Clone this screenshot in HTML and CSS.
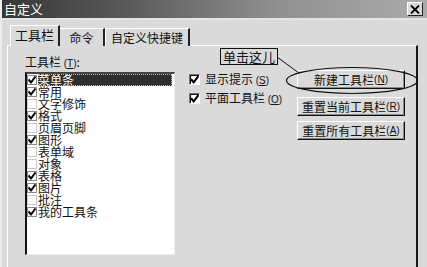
FILE: index.html
```html
<!DOCTYPE html>
<html lang="zh">
<head>
<meta charset="utf-8">
<title>自定义</title>
<link rel="stylesheet" href="styles.css">
</head>
<body>
<div class="window">
  <div class="titlebar">
    <span class="title">自定义</span>
    <span class="close">
      <svg width="10" height="9" viewBox="0 0 10 9"><path d="M1 0.5 L9 8.5 M9 0.5 L1 8.5" stroke="#000" stroke-width="1.8"/></svg>
    </span>
  </div>
  <div class="tabs">
    <div class="tab active">工具栏</div>
    <div class="tab t2">命令</div>
    <div class="tab t3">自定义快捷键</div>
  </div>
  <div class="panel">
    <div class="col-list">
      <div class="label">工具栏 <span class="acc">(<u>T</u>)</span>:</div>
      <div class="listbox">
        <div class="row sel"><span class="cb on"></span><span class="txt">菜单条</span></div>
        <div class="row"><span class="cb on"></span><span class="txt">常用</span></div>
        <div class="row"><span class="cb"></span><span class="txt">文字修饰</span></div>
        <div class="row"><span class="cb on"></span><span class="txt">格式</span></div>
        <div class="row"><span class="cb"></span><span class="txt">页眉页脚</span></div>
        <div class="row"><span class="cb on"></span><span class="txt">图形</span></div>
        <div class="row"><span class="cb"></span><span class="txt">表单域</span></div>
        <div class="row"><span class="cb"></span><span class="txt">对象</span></div>
        <div class="row"><span class="cb on"></span><span class="txt">表格</span></div>
        <div class="row"><span class="cb on"></span><span class="txt">图片</span></div>
        <div class="row"><span class="cb"></span><span class="txt">批注</span></div>
        <div class="row"><span class="cb on"></span><span class="txt">我的工具条</span></div>
      </div>
    </div>
    <div class="col-opts">
      <div class="opt"><span class="bigcb on"></span><span>显示提示 <span class="acc">(<u>S</u>)</span></span></div>
      <div class="opt"><span class="bigcb on"></span><span>平面工具栏 <span class="acc">(<u>O</u>)</span></span></div>
    </div>
    <div class="col-btns">
      <div class="btn first">新建工具栏 <span class="acc">(<u>N</u>)</span></div>
      <div class="btn second">重置当前工具栏 <span class="acc">(<u>R</u>)</span></div>
      <div class="btn">重置所有工具栏 <span class="acc">(<u>A</u>)</span></div>
    </div>
  </div>
  <div class="callout">单击这儿</div>
  <svg class="annot" width="427" height="267" viewBox="0 0 427 267">
    <path d="M277 57 L299 73" stroke="#111" stroke-width="1" fill="none"/>
    <ellipse cx="352" cy="80.5" rx="65.5" ry="13" stroke="#111" stroke-width="1.2" fill="none"/>
  </svg>
</div>
</body>
</html>
```

FILE: styles.css
```css
* { box-sizing: border-box; }
html, body { margin: 0; padding: 0; }
body {
  background: #dadada;
  font-family: "Noto Sans CJK SC", "Liberation Sans", sans-serif;
  font-size: 12px;
  color: #111;
}
.window {
  position: relative;
  width: 427px;
  height: 267px;
  overflow: hidden;
  background: #dadada;
  border-left: 2px solid #ececec;
}
.titlebar {
  height: 20px;
  display: flex;
  align-items: center;
  justify-content: space-between;
  padding: 0 4px 0 2px;
  background: linear-gradient(to right, #363636 0%, #5a5a5a 30%, #909090 65%, #ababab 100%);
  border-bottom: 2px solid #e4e4e4;
  margin-left: -2px;
}
.title {
  color: #fff;
  font-size: 13px;
  line-height: 14px;
  padding-left: 2px;
}
.close {
  width: 16px;
  height: 14px;
  display: flex;
  align-items: center;
  justify-content: center;
  background: #d8d8d8;
  border: 1px solid;
  border-color: #fff #222 #222 #fff;
}
.tabs {
  display: flex;
  align-items: flex-end;
  margin-top: 6px;
  padding-left: 8px;
  height: 20px;
  margin-bottom: -1px;
  position: relative;
  z-index: 1;
}
.tab {
  height: 18px;
  font-size: 12px;
  line-height: 14px;
  white-space: nowrap;
  display: flex;
  align-items: center;
  justify-content: center;
  border-top: 1px solid #fff;
  border-left: 1px solid #fff;
  border-right: 2px solid #222;
  background: #dadada;
}
.tab.active {
  height: 21px;
  width: 50px;
  font-size: 13px;
  padding-bottom: 2px;
}
.tab.t2 { width: 45px; border-left: none; }
.tab.t3 { width: 85px; }
.panel {
  display: flex;
  height: 230px;
  margin-left: 5px;
  width: 411px;
  border-top: 1px solid #fff;
  border-left: 1px solid #fff;
  border-right: 2px solid #1a1a1a;
  padding: 10px 0 0 17px;
}
.col-list {
  width: 150px;
  display: flex;
  flex-direction: column;
}
.label {
  height: 12px;
  line-height: 12px;
  margin-bottom: 4px;
}
.acc {
  font-family: "Liberation Sans", sans-serif;
  font-size: 10px;
}
.listbox {
  height: 183px;
  background: #fff;
  border-top: 2px solid #444;
  border-left: 2px solid #111;
  border-right: 1px solid #eee;
  border-bottom: 1px solid #eee;
  padding-top: 0;
}
.row {
  display: flex;
  align-items: center;
  height: 12px;
}
.cb {
  width: 10px;
  height: 10px;
  flex: none;
  margin-right: 1px;
  background: #fff;
  border: 1px solid #c8c8c8;
}
.cb.on, .bigcb.on {
  background-image: url("data:image/svg+xml;utf8,<svg xmlns='http://www.w3.org/2000/svg' width='10' height='10' viewBox='0 0 10 10'><path d='M1.5 4.5 L4 7.5 L8.5 1.5' stroke='%23000' stroke-width='2' fill='none'/></svg>");
  background-repeat: no-repeat;
  background-position: center;
}
.cb.on { border-color: #888; }
.txt {
  display: block;
  height: 12px;
  line-height: 12px;
  font-size: 12px;
}
.row.sel .txt {
  flex: 1;
  background: #2e2e2e;
  color: #fff;
  outline: 1px dotted #bbb;
  outline-offset: -1px;
  margin-right: 2px;
}
.col-opts {
  width: 108px;
  margin-left: 14px;
  padding-top: 18px;
  display: flex;
  flex-direction: column;
  gap: 8px;
}
.opt {
  display: flex;
  align-items: center;
  gap: 5px;
  height: 11px;
  font-size: 12px;
  line-height: 12px;
}
.bigcb {
  width: 11px;
  height: 11px;
  flex: none;
  background-color: #fff;
  border: 1px solid;
  border-color: #777 #fff #fff #777;
  box-shadow: inset 1px 1px #111;
}
.col-btns {
  display: flex;
  flex-direction: column;
  padding-top: 14px;
}
.btn {
  width: 108px;
  height: 19px;
  display: flex;
  align-items: center;
  justify-content: center;
  font-size: 12px;
  line-height: 12px;
  background: #dadada;
  border: 1px solid;
  border-color: #fff #111 #111 #fff;
  box-shadow: inset -1px -1px #888;
}
.btn.first { margin-bottom: 8px; }
.btn.second { margin-bottom: 5px; }
.callout {
  position: absolute;
  left: 218px;
  top: 48px;
  width: 58px;
  height: 17px;
  border: 1px solid #111;
  background: #dadada;
  font-size: 13px;
  line-height: 15px;
  text-align: center;
  z-index: 3;
}
.annot {
  position: absolute;
  left: -2px;
  top: 0;
  z-index: 2;
  pointer-events: none;
}
```
